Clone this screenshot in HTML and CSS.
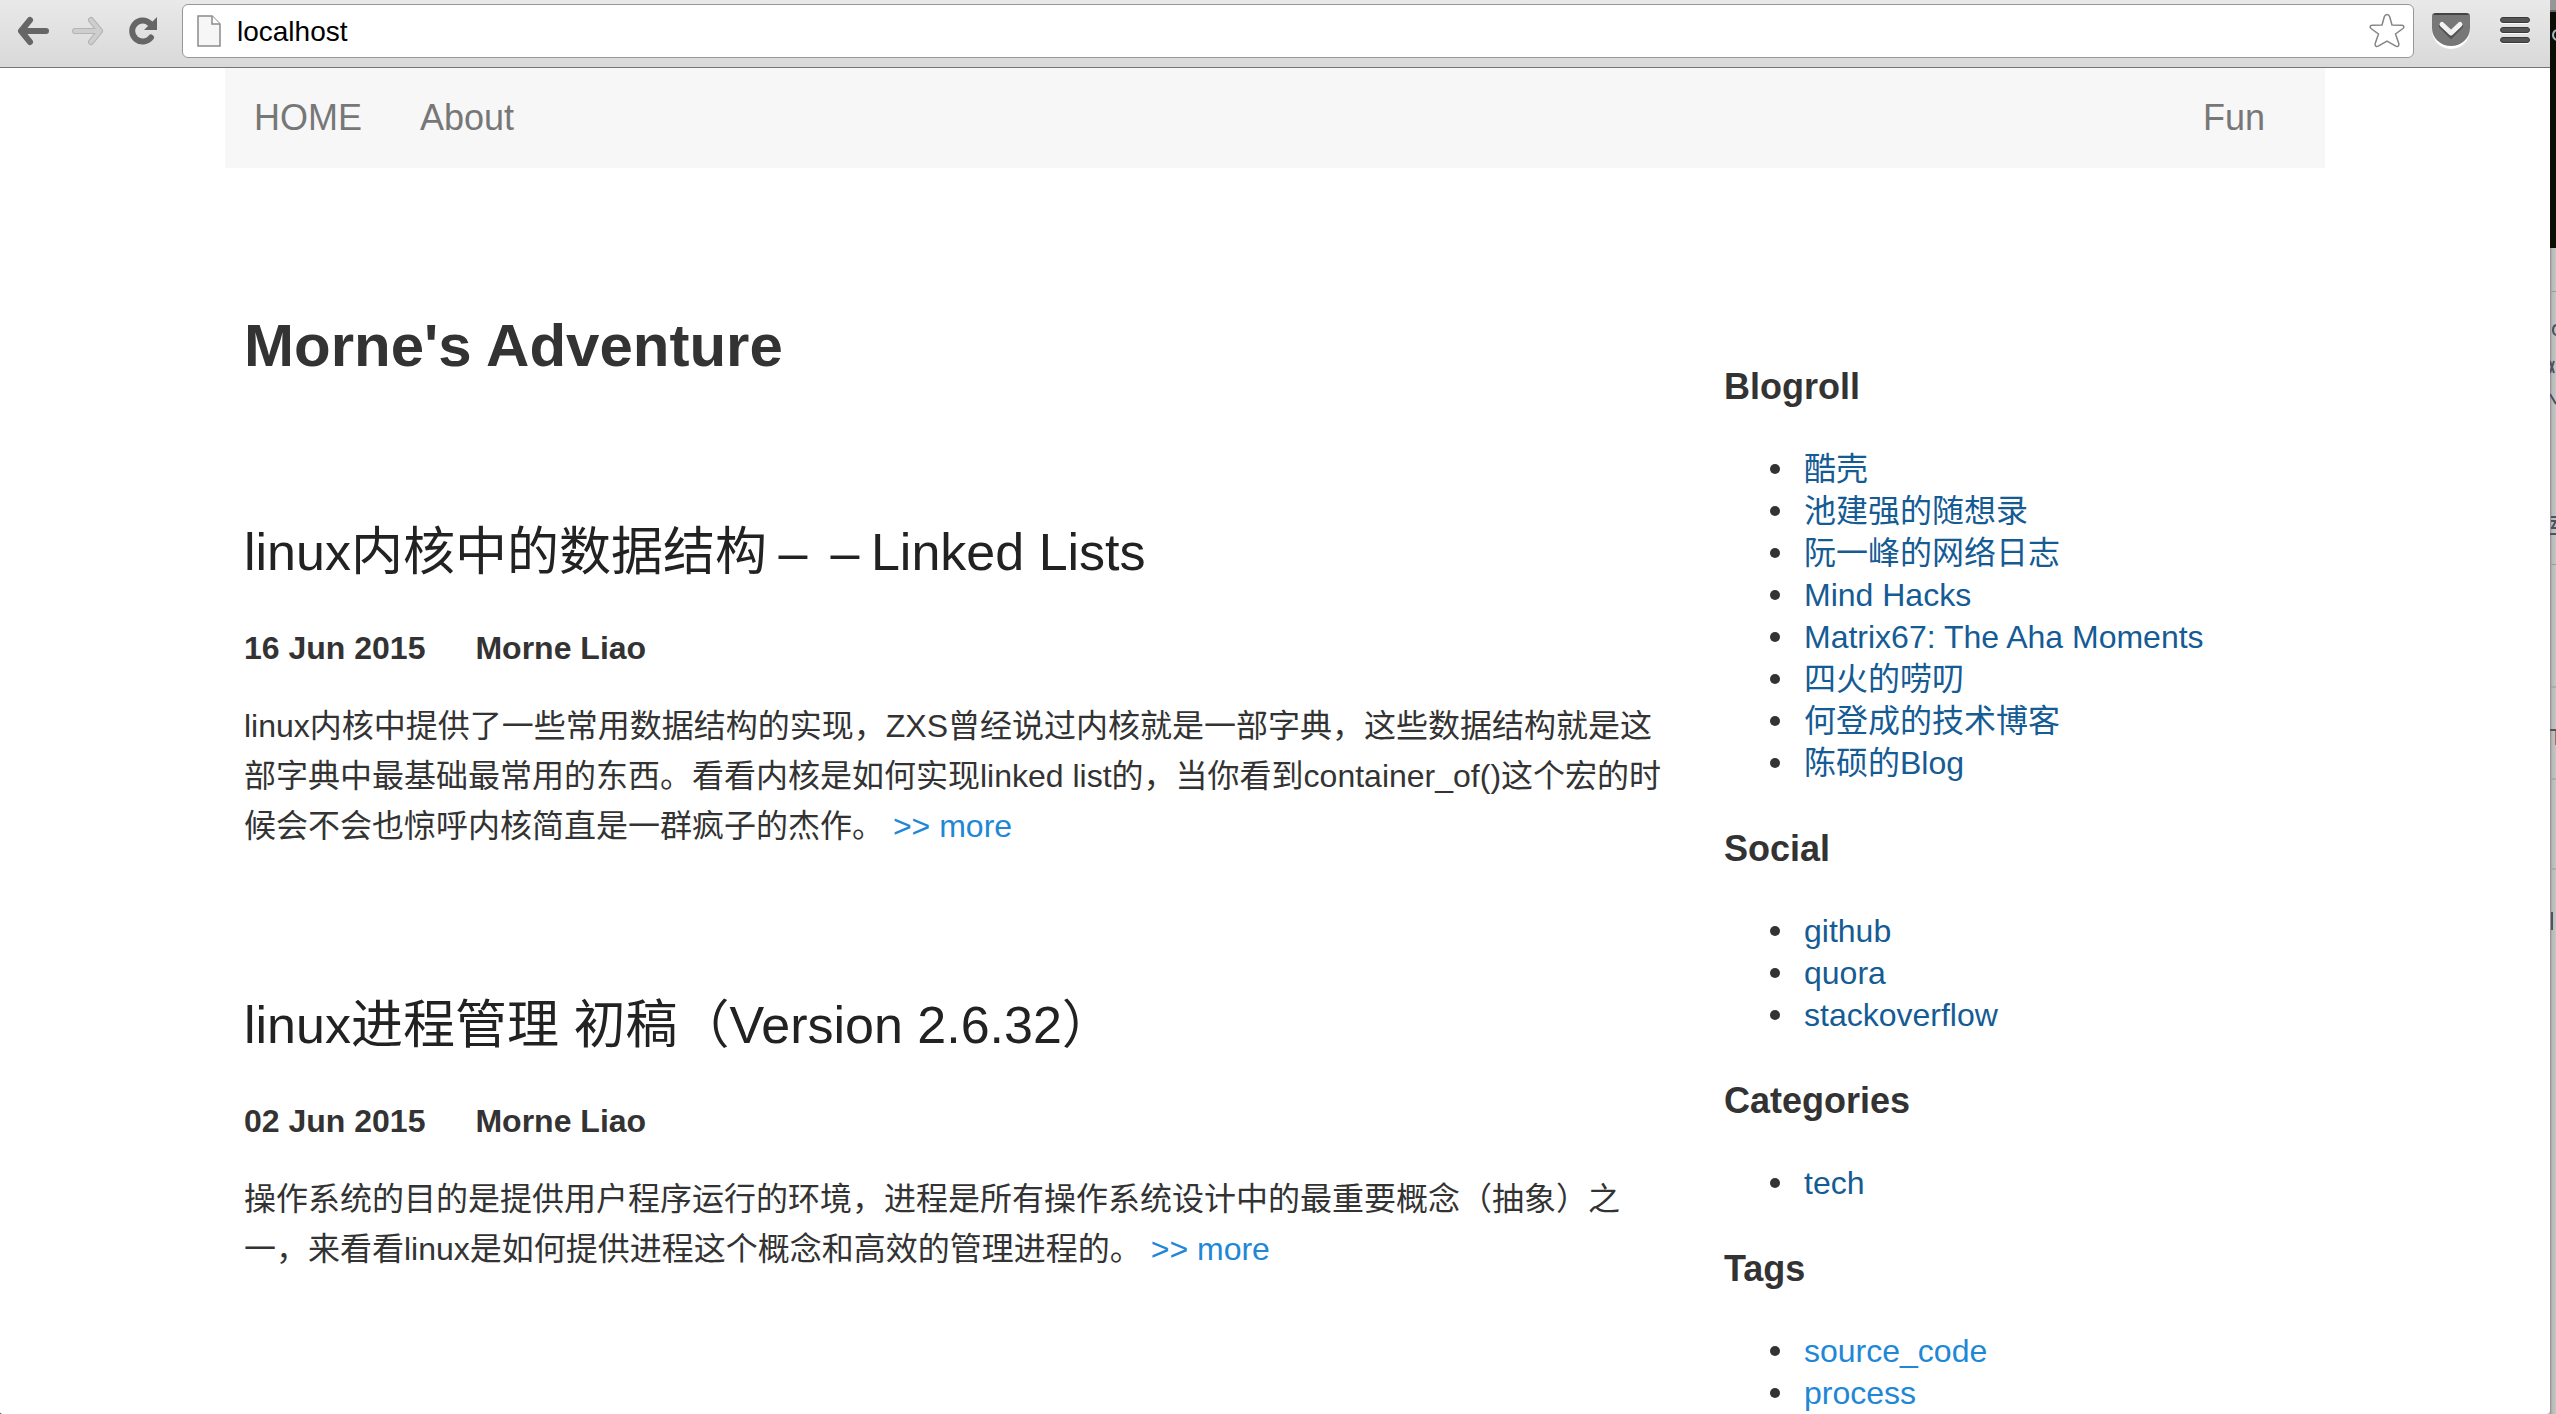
FILE: index.html
```html
<!DOCTYPE html>
<html lang="zh-CN">
<head>
<meta charset="utf-8">
<title>Morne's Adventure</title>
<link rel="stylesheet" href="styles.css">
</head>
<body>
<div class="desktop">
  <div class="window">
    <header class="toolbar">
      <button class="tool" type="button" aria-label="Back">
        <svg width="32" height="30" viewBox="0 0 32 30"><path d="M13 4 4 15l9 11M5 15h24" fill="none" stroke="#666" stroke-width="6" stroke-linecap="round" stroke-linejoin="round"/></svg>
      </button>
      <button class="tool" type="button" aria-label="Forward" disabled>
        <svg width="32" height="30" viewBox="0 0 32 30"><path d="M19 4l9 11-9 11M27 15H3" fill="none" stroke="#b4b4b4" stroke-width="6" stroke-linecap="round" stroke-linejoin="round"/><path d="M19 4l9 11-9 11M27 15H3" fill="none" stroke="#cecece" stroke-width="4" stroke-linecap="round" stroke-linejoin="round"/></svg>
      </button>
      <button class="tool" type="button" aria-label="Reload">
        <svg width="32" height="30" viewBox="0 0 32 30"><path d="M24 21.500a10.500 10.500 0 1 1-1-14" fill="none" stroke="#666" stroke-width="6" stroke-linecap="round"/><path d="M30 1v13H17z" fill="#666"/></svg>
      </button>
      <label class="address">
        <svg width="24" height="32" viewBox="0 0 24 32"><path d="M1 1h14l8 8v22H1z" fill="#f6f6f6" stroke="#8a8a8a" stroke-width="1.500"/><path d="M15 1v8h8" fill="#fff" stroke="#8a8a8a" stroke-width="1.500"/></svg>
        <input class="url" type="text" value="localhost" aria-label="Address">
        <svg width="36" height="36" viewBox="0 0 36 36"><path d="M18 1.500c1.500 0 2.300 1 2.700 2.300L23 12l10 .3c2 .2 2.500 2 1 3.200L26.500 21l3.300 9.500c.6 2.500-1.200 3.700-3 2.700L18 28l-8.800 5.200c-1.800 1-3.600-.2-3-2.700L9.500 21 2 15.500c-1.500-1.200-1-3 1-3.200l10-.3 2.300-8.200c.4-1.300 1.200-2.300 2.700-2.300z" fill="#fff" stroke="#858585" stroke-width="1.500"/></svg>
      </label>
      <button class="tool" type="button" aria-label="Pocket">
        <svg width="38" height="36" viewBox="0 0 38 36"><path d="M0 4q0-2 2-2h34q2 0 2 2v13a19 19 0 0 1-38 0z" fill="#fff"/><path d="M0 3q0-3 3-3h32q3 0 3 3v12a19 18 0 0 1-38 0z" fill="#777"/><path d="M1 2q1-2 3-2h30q2 0 3 2z" fill="#444"/><path d="M10 13l9 9 9-9" fill="none" stroke="#505050" stroke-width="6" stroke-linecap="round"/><path d="M10 11.500l9 8.500 9-8.500" fill="none" stroke="#f2f2f2" stroke-width="5" stroke-linecap="round" stroke-linejoin="round"/></svg>
      </button>
      <button class="tool" type="button" aria-label="Menu">
        <svg width="30" height="28" viewBox="0 0 30 28"><g fill="#fafafa"><rect y="1" width="30" height="6" rx="3"/><rect y="11" width="30" height="6" rx="3"/><rect y="21" width="30" height="6" rx="3"/></g><g fill="#555" stroke="#3a3a3a"><rect x=".5" y=".5" width="29" height="5" rx="2.500"/><rect x=".5" y="10.500" width="29" height="5" rx="2.500"/><rect x=".5" y="20.500" width="29" height="5" rx="2.500"/></g></svg>
      </button>
    </header>

    <div class="page">
      <nav class="navbar">
        <a href="#">HOME</a>
        <a href="#">About</a>
        <a class="last" href="#">Fun</a>
      </nav>
      <div class="columns">
        <main>
          <h1>Morne's Adventure</h1>
          <article>
            <h2><a href="#">linux内核中的数据结构<span class="dash">–</span><span class="dash">–</span>Linked Lists</a></h2>
            <p class="meta"><span>16 Jun 2015</span><span>Morne Liao</span></p>
            <p>linux内核中提供了一些常用数据结构的实现，ZXS曾经说过内核就是一部字典，这些数据结构就是这部字典中最基础最常用的东西。看看内核是如何实现linked list的，当你看到container_of()这个宏的时候会不会也惊呼内核简直是一群疯子的杰作。 <a href="#">&gt;&gt; more</a></p>
          </article>
          <article>
            <h2><a href="#">linux进程管理 初稿（Version 2.6.32）</a></h2>
            <p class="meta"><span>02 Jun 2015</span><span>Morne Liao</span></p>
            <p>操作系统的目的是提供用户程序运行的环境，进程是所有操作系统设计中的最重要概念（抽象）之一，来看看linux是如何提供进程这个概念和高效的管理进程的。 <a href="#">&gt;&gt; more</a></p>
          </article>
        </main>
        <aside class="sidebar">
          <h3>Blogroll</h3>
          <ul>
            <li><a href="#">酷壳</a></li>
            <li><a href="#">池建强的随想录</a></li>
            <li><a href="#">阮一峰的网络日志</a></li>
            <li><a href="#">Mind Hacks</a></li>
            <li><a href="#">Matrix67: The Aha Moments</a></li>
            <li><a href="#">四火的唠叨</a></li>
            <li><a href="#">何登成的技术博客</a></li>
            <li><a href="#">陈硕的Blog</a></li>
          </ul>
          <h3>Social</h3>
          <ul>
            <li><a href="#">github</a></li>
            <li><a href="#">quora</a></li>
            <li><a href="#">stackoverflow</a></li>
          </ul>
          <h3>Categories</h3>
          <ul>
            <li><a href="#">tech</a></li>
          </ul>
          <h3>Tags</h3>
          <ul class="tags">
            <li><a href="#">source_code</a></li>
            <li><a href="#">process</a></li>
          </ul>
        </aside>
      </div>
    </div>
  </div>
  <div class="behind">
    <svg width="6" height="1414" viewBox="0 0 6 1414">
      <path d="M0 0h6v10H0z" fill="#969696"/><path d="M0 10h6v2H0z" fill="#666"/>
      <path d="M0 12h6v236H0z" fill="#0a0e04"/>
      <path d="M6 30q-3 2-3 5t3 5" fill="none" stroke="#9fb6c4" stroke-width="2"/>
      <path d="M0 291.500h6M0 564.500h6M0 687h6M0 779h6M0 869h6" stroke="#9c9c9c"/>
      <path d="M0 730h6" stroke="#555" stroke-width="2"/><path d="M5.500 731v14" stroke="#a0705c"/>
      <path d="M6 325q-3 1-3 5t3 5M0 361l4 12M4 361l-4 12M0 394l6 10M1 517h5M1 521h5M2 528l4-7M1 528h5M0 534h6M2 912v18" fill="none" stroke="#4c5260" stroke-width="2"/>
    </svg>
  </div>
</div>
</body>
</html>
```
FILE: styles.css
```css
* { box-sizing: border-box; }

body {
  margin: 0;
  background: #fff;
  color: #333;
  font-family: "Liberation Sans", "Noto Sans CJK SC", sans-serif;
  font-size: 32px;
  line-height: 50px;
}

a { color: #1e87d6; text-decoration: none; }
h1, h2, h3, p, ul { margin: 0; }

.desktop {
  display: flex;
  height: 100vh;
  overflow: hidden;
  background: linear-gradient(90deg, #16260c 50%, #bcbcbc 50%);
}

.window {
  flex: 1;
  min-width: 0;
  overflow: hidden;
  border-radius: 0 0 4px 2px;
  background: #fff;
}

.behind {
  width: 6px;
  background: linear-gradient(90deg, #8c8c8c, #b8b8b8 2px, #c6c6c6);
  overflow: hidden;
}
.behind svg { display: block; }

/* browser toolbar */
.toolbar {
  display: flex;
  align-items: center;
  gap: 23px;
  height: 68px;
  padding: 0 20px 6px 17px;
  border-bottom: 1px solid #757575;
  background: linear-gradient(#e9e9e9, #d9d9d9);
}
.toolbar svg { display: block; flex: none; }

.tool {
  padding: 0;
  border: 0;
  background: none;
}
.tool:nth-of-type(n + 4) { margin-left: -5px; }
.tool:last-child { margin-left: 7px; }

.address {
  display: flex;
  flex: 1;
  align-items: center;
  gap: 16px;
  height: 54px;
  padding: 0 8px 0 14px;
  border: 1px solid #979797;
  border-radius: 6px;
  background: #fff;
}

.url {
  flex: 1;
  min-width: 0;
  padding: 2px 0 0;
  border: 0;
  outline: 0;
  background: none;
  color: #000;
  font: 28px/36px "Liberation Sans", sans-serif;
}

/* blog */
.page {
  max-width: 2100px;
  margin: 0 auto;
}

.navbar {
  display: flex;
  gap: 58px;
  padding: 25px 60px 25px 29px;
  background: #f7f7f7;
  font-size: 36px;
}
.navbar a { color: #777; }
.navbar .last { margin-left: auto; }

.columns {
  display: grid;
  grid-template-columns: minmax(0, 1fr) 581px;
  gap: 60px;
  padding: 0 20px 0 19px;
}

h1 {
  padding-top: 140px;
  font-size: 60px;
  line-height: 76px;
}

article { padding-top: 130px; }
article + article { padding-top: 136px; }

h2 {
  font-size: 52px;
  font-weight: 400;
  line-height: 76px;
}
h2 a { color: #222; }

/* each dash fills one full-width character cell */
.dash {
  display: inline-block;
  width: 1em;
  text-align: center;
}

.meta {
  display: flex;
  gap: 50px;
  padding: 33px 0 28px;
  font-weight: 700;
}

.sidebar { padding-top: 194px; }

h3 {
  font-size: 36px;
  margin-bottom: 36px;
}

ul {
  padding-left: 46px;
  margin-bottom: 40px;
  line-height: 42px;
  list-style: none;
}
li {
  display: flex;
  align-items: center;
  gap: 24px;
}
li::before {
  content: "";
  width: 10px;
  height: 10px;
  border-radius: 50%;
  background: #333;
}
ul a { color: #155b94; }
.tags a { color: #1e87d6; }
```
